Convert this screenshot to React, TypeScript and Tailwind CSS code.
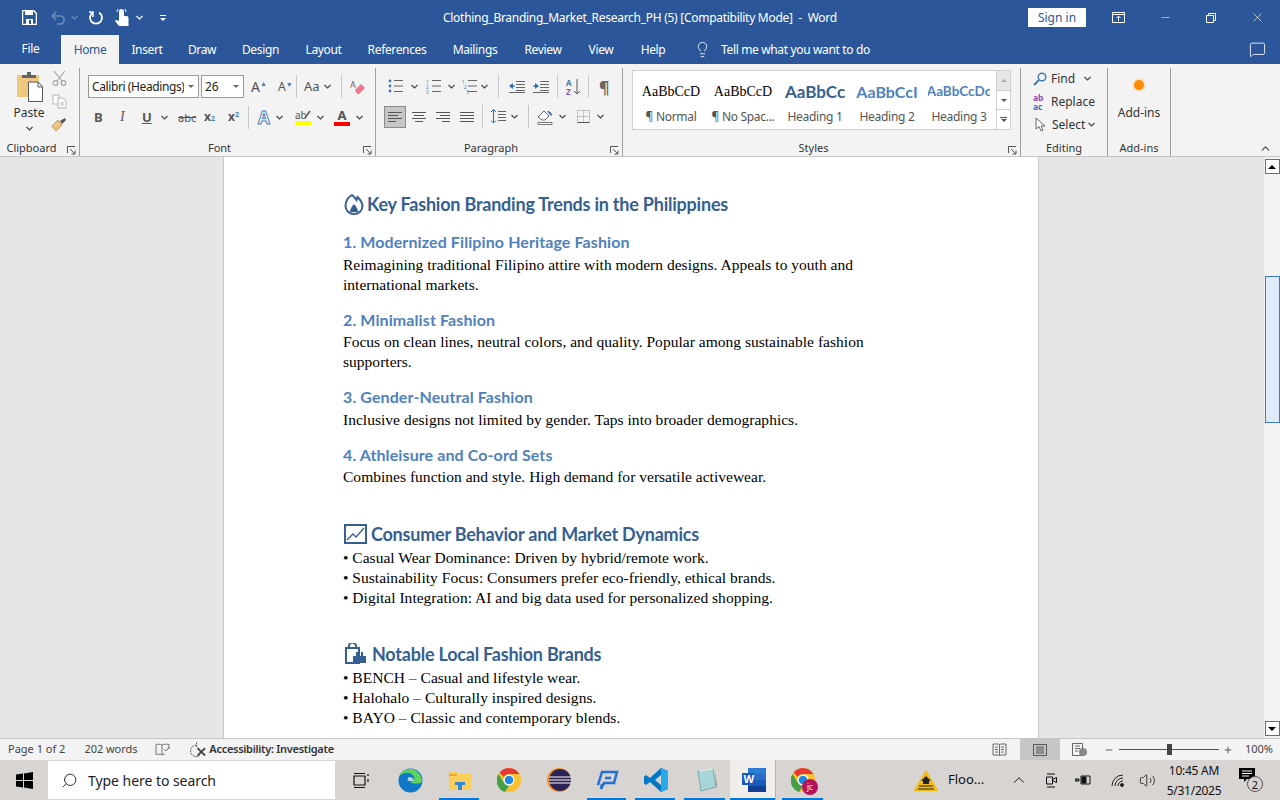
import type { ReactNode } from 'react';
import { ChevronUp, Lightbulb, MessageSquare, Minus, Plus, Search, Volume2, X } from 'lucide-react';

const ui = "font-['Noto_Sans',sans-serif]";

function Chev({ className = 'text-[#444]' }: { className?: string }) {
  return (
    <svg width="7" height="5" viewBox="0 0 7 5" className={`shrink-0 ${className}`}>
      <path d="M.5 1 3.500 4 6.500 1" fill="none" stroke="currentColor" strokeWidth="1.100" />
    </svg>
  );
}

function Launcher() {
  return (
    <svg width="9" height="9" viewBox="0 0 9 9" className="shrink-0 text-[#555]">
      <path d="M.5 7V.5H8M3 3l5 5M8 4.500V8H4.500" fill="none" stroke="currentColor" />
    </svg>
  );
}

function Group({
  label,
  className,
  launcher,
  children,
}: {
  label: string;
  className: string;
  launcher?: boolean;
  children: ReactNode;
}) {
  return (
    <div className={`relative flex h-[88px] shrink-0 flex-col border-r border-[#9f9f9f] ${className}`}>
      <div className="h-[71px]">{children}</div>
      <div className={`flex h-[16px] items-center justify-center text-[11px] leading-none text-[#333] ${launcher ? 'pr-[16px]' : ''}`}>
        {label}
      </div>
      {launcher && (
        <span className="absolute bottom-[1px] right-[3px]">
          <Launcher />
        </span>
      )}
    </div>
  );
}

function Lines({ align = 'left' }: { align?: 'left' | 'center' | 'right' | 'full' }) {
  const rows =
    align === 'left'
      ? ['M0 .5h14', 'M0 3.500h10', 'M0 6.500h14', 'M0 9.500h8']
      : align === 'center'
        ? ['M0 .5h14', 'M2 3.500h10', 'M0 6.500h14', 'M3 9.500h8']
        : align === 'right'
          ? ['M0 .5h14', 'M4 3.500h10', 'M0 6.500h14', 'M6 9.500h8']
          : ['M0 .5h14', 'M0 3.500h14', 'M0 6.500h14', 'M0 9.500h14'];
  return (
    <svg width="14" height="10" viewBox="0 0 14 10">
      <path d={rows.join('')} stroke="#555" fill="none" />
    </svg>
  );
}

function ClipboardGroup() {
  return (
    <div className="flex pl-[12px] pt-[2px]">
      <div className="flex w-[34px] flex-col items-center pt-[2px]">
        <svg width="30" height="30" viewBox="0 0 30 30">
          <path d="M3 3h22v22H3z" fill="#edc87e" />
          <path d="M8 6V3h5V0h4v3h5v3z" fill="#666" />
          <path d="M14.500 10H24l4.500 4.500v15h-14z" fill="#fff" stroke="#555" />
          <path d="M24 10v5h4.500" fill="none" stroke="#555" />
        </svg>
        <span className="mt-[3px] text-[12px] leading-[16px] text-[#333]">Paste</span>
        <span className="mt-[5px]">
          <Chev />
        </span>
      </div>
      <div className="ml-[5px] flex flex-col items-center gap-[8px]">
        <svg width="15" height="16" viewBox="0 0 15 16" fill="none" stroke="#a5a5a5" strokeWidth="1.200">
          <path d="M2 1l8 10M13 1 5 11" />
          <circle cx="3.500" cy="13" r="2.300" />
          <circle cx="11.500" cy="13" r="2.300" />
        </svg>
        <svg width="15" height="15" viewBox="0 0 15 15" fill="#fff" stroke="#b5b5b5">
          <path d="M1 1h6v9H1z" />
          <path d="M6 4h5l3 3v7H6z" />
          <path d="M8 9h4M8 11h4" />
        </svg>
        <svg width="16" height="15" viewBox="0 0 16 15">
          <path d="M1 9 7 3l4 5-6 6z" fill="#edc87e" stroke="#b9975b" />
          <path d="M9 4l5-3 1 2-4 4z" fill="#555" />
        </svg>
      </div>
    </div>
  );
}

function FontGroup() {
  return (
    <div className="flex flex-col pl-[8px] pt-[7px]">
      <div className="flex h-[23px] items-center">
        <div className="flex h-[23px] w-[111px] items-center justify-between border border-[#9a9a9a] bg-white pl-[3px] pr-[4px] text-[12px] text-[#222]">
          <span className="overflow-hidden whitespace-nowrap tracking-[-0.4px]">Calibri (Headings)</span>
          <span className="ml-[3px] h-0 w-0 shrink-0 border-x-[3px] border-t-[3px] border-x-transparent border-t-[#666]" />
        </div>
        <div className="ml-[2px] flex h-[23px] w-[43px] items-center justify-between border border-[#9a9a9a] bg-white pl-[3px] pr-[4px] text-[12px] text-[#222]">
          26
          <span className="h-0 w-0 border-x-[3px] border-t-[3px] border-x-transparent border-t-[#666]" />
        </div>
        <span className="ml-[7px] flex w-[17px] items-start text-[14px] leading-none text-[#555]">
          A<span className="text-[7px] text-[#4a7ebb]">▲</span>
        </span>
        <span className="ml-[10px] flex w-[14px] items-start text-[12px] leading-none text-[#555]">
          A<span className="text-[7px] text-[#4a7ebb]">▼</span>
        </span>
        <span className="mx-[4px] h-[23px] w-px shrink-0 bg-[#c6c6c6]" />
        <span className="ml-[3px] text-[13px] text-[#555]">Aa</span>
        <span className="ml-[4px]">
          <Chev />
        </span>
        <span className="ml-[10px] mr-[8px] h-[23px] w-px bg-[#c6c6c6]" />
        <svg width="16" height="16" viewBox="0 0 16 16">
          <text x="0" y="9" fontSize="9" fill="#666" fontFamily="Noto Sans">A</text>
          <path d="M5 11 11 5l4 4-6 6H7z" fill="#e8788e" />
        </svg>
      </div>
      <div className="mt-[7px] flex h-[24px] items-center text-[#555]">
        <span className="ml-[6px] w-[26px] text-[13px] font-bold leading-none">B</span>
        <span className="w-[22px] font-['Liberation_Serif',serif] text-[14px] italic leading-none">I</span>
        <span className="w-[19px] text-[13px] font-bold leading-none underline">U</span>
        <span className="w-[17px]">
          <Chev />
        </span>
        <span className="w-[26px] text-[11px] leading-none line-through">abc</span>
        <span className="w-[24px] text-[12px] font-bold leading-none">
          x<span className="text-[7px] text-[#4a7ebb]">2</span>
        </span>
        <span className="flex w-[17px] items-start text-[12px] font-bold leading-none">
          x<span className="text-[7px] text-[#4a7ebb]">2</span>
        </span>
        <span className="ml-[3px] h-[23px] w-px bg-[#c6c6c6]" />
        <span className="ml-[9px] w-[18px] text-[17px] font-bold leading-none text-white [-webkit-text-stroke:1px_#4a7ebb]">
          A
        </span>
        <span className="w-[19px]">
          <Chev />
        </span>
        <span className="relative flex w-[16px] flex-col items-start text-[10px] leading-[11px]">
          ab
          <span className="h-[4px] w-[16px] bg-[#ffff00]" />
          <svg width="7" height="9" viewBox="0 0 7 9" className="absolute right-0 top-0">
            <path d="M1 8 6 1" stroke="#555" strokeWidth="1.500" />
          </svg>
        </span>
        <span className="ml-[6px] w-[14px]">
          <Chev />
        </span>
        <span className="ml-[3px] flex w-[16px] flex-col items-center text-[13px] font-bold leading-[13px]">
          A
          <span className="h-[4px] w-[16px] bg-[#ff0000]" />
        </span>
        <span className="ml-[6px]">
          <Chev />
        </span>
      </div>
    </div>
  );
}

function ListGlyph({ numbered, indent }: { numbered?: boolean; indent?: boolean }) {
  return (
    <svg width="15" height="15" viewBox="0 0 15 15">
      {numbered ? (
        <g fill="#3f76b5" fontSize="4.500" fontFamily="Noto Sans">
          <text x="0" y="4.500">1</text>
          <text x={indent ? 2 : 0} y="9.500">2</text>
          <text x={indent ? 4 : 0} y="14.500">3</text>
        </g>
      ) : (
        <g fill="#3f76b5">
          <circle cx="2" cy="2" r="1.400" />
          <circle cx="2" cy="7" r="1.400" />
          <circle cx="2" cy="12" r="1.400" />
        </g>
      )}
      <path d="M6 1.500h9M6 7h9M6 12.500h9" stroke="#666" fill="none" />
    </svg>
  );
}

function ParagraphGroup() {
  return (
    <div className="flex flex-col pl-[8px] pt-[7px]">
      <div className="flex h-[23px] items-center pl-[4px]">
        <ListGlyph />
        <span className="ml-[8px]">
          <Chev />
        </span>
        <span className="ml-[8px]">
          <ListGlyph numbered />
        </span>
        <span className="ml-[7px]">
          <Chev />
        </span>
        <span className="ml-[7px]">
          <ListGlyph numbered indent />
        </span>
        <span className="ml-[4px]">
          <Chev />
        </span>
        <span className="mx-[10px] h-[23px] w-px bg-[#c6c6c6]" />
        <svg width="16" height="12" viewBox="0 0 16 12">
          <path d="M7 .5h9M7 3.500h9M7 6.500h9M7 9.500h9M0 11.500h16" stroke="#666" fill="none" />
          <path d="M0 5 4 2v6z" fill="#2f6eb5" />
          <path d="M3 4.500h3v1.200H3z" fill="#2f6eb5" />
        </svg>
        <svg width="16" height="12" viewBox="0 0 16 12" className="ml-[8px]">
          <path d="M7 .5h9M7 3.500h9M7 6.500h9M7 9.500h9M0 11.500h16" stroke="#666" fill="none" />
          <path d="M6 5 2 2v6z" fill="#2f6eb5" />
          <path d="M0 4.500h3v1.200H0z" fill="#2f6eb5" />
        </svg>
        <span className="mx-[8px] h-[23px] w-px bg-[#c6c6c6]" />
        <svg width="15" height="20" viewBox="0 0 15 20">
          <text x="0" y="9" fontSize="8" fontWeight="700" fill="#3f76b5" fontFamily="Noto Sans">A</text>
          <text x="0" y="18" fontSize="8" fontWeight="700" fill="#8a4fb0" fontFamily="Noto Sans">Z</text>
          <path d="M11 2v15M8 14l3 3 3-3" stroke="#555" fill="none" />
        </svg>
        <span className="mx-[7px] h-[23px] w-px bg-[#c6c6c6]" />
        <span className="ml-[3px] text-[16px] font-bold leading-none text-[#666]">¶</span>
      </div>
      <div className="mt-[7px] flex h-[23px] items-center">
        <span className="flex h-[22px] w-[22px] items-center justify-center border border-[#8a8a8a] bg-[#c6c6c6]">
          <Lines />
        </span>
        <span className="ml-[6px]">
          <Lines align="center" />
        </span>
        <span className="ml-[10px]">
          <Lines align="right" />
        </span>
        <span className="ml-[10px]">
          <Lines align="full" />
        </span>
        <span className="mx-[8px] h-[23px] w-px bg-[#c6c6c6]" />
        <svg width="15" height="15" viewBox="0 0 15 15">
          <path d="M2.500 1v13M0 3l2.500-2.500L5 3M0 11.500 2.500 14 5 11.500" stroke="#2f6eb5" fill="none" />
          <path d="M7 2.500h8M7 5.500h8M7 8.500h8M7 11.500h8" stroke="#666" fill="none" />
        </svg>
        <span className="ml-[5px]">
          <Chev />
        </span>
        <span className="ml-[10px] mr-[8px] h-[23px] w-px bg-[#c6c6c6]" />
        <svg width="17" height="16" viewBox="0 0 17 16">
          <path d="M1 8 7 2l5 5-4 4H5z" fill="#fff" stroke="#666" />
          <path d="M10 2c3 0 5 2 5 5l-2-1z" fill="#3f76b5" />
          <path d="M1 13.500h14v2H1z" fill="#fff" stroke="#777" />
        </svg>
        <span className="ml-[5px]">
          <Chev />
        </span>
        <svg width="13" height="13" viewBox="0 0 13 13" className="ml-[11px]">
          <path d="M.5.5h12v12H.5zM6.500.5v12M.5 6.500h12" stroke="#999" strokeDasharray="1 1" fill="none" />
          <path d="M.5 12.500h12" stroke="#555" />
        </svg>
        <span className="ml-[7px]">
          <Chev />
        </span>
      </div>
    </div>
  );
}

const styleItems = [
  { preview: 'AaBbCcD', label: '¶ Normal', cls: "font-['Liberation_Serif',serif] text-[14px] text-black" },
  { preview: 'AaBbCcD', label: '¶ No Spac...', cls: "font-['Liberation_Serif',serif] text-[14px] text-black" },
  { preview: 'AaBbCc', label: 'Heading 1', cls: "font-['Lato',sans-serif] text-[17px] font-bold text-[#365f91]" },
  { preview: 'AaBbCcI', label: 'Heading 2', cls: "font-['Lato',sans-serif] text-[16px] font-bold text-[#4f81bd]" },
  { preview: 'AaBbCcDc', label: 'Heading 3', cls: "font-['Lato',sans-serif] text-[13.500px] font-bold text-[#4f81bd]" },
];

function StylesGroup() {
  return (
    <div className="flex pl-[9px] pt-[2px]">
      <div className="flex h-[60px] w-[379px] border border-[#d0d0d0] bg-white">
        <div className="flex flex-1 pl-[2px]">
          {styleItems.map((s) => (
            <div key={s.label} className="flex w-[72px] flex-col items-center">
              <div className={`flex h-[38px] w-[62px] items-center justify-center overflow-hidden whitespace-nowrap pt-[3px] ${s.cls}`}>
                {s.preview}
              </div>
              <div className="text-[12px] leading-[16px] tracking-[-0.3px] text-[#555]">{s.label}</div>
            </div>
          ))}
        </div>
        <div className="flex w-[14px] flex-col border-l border-[#d0d0d0] text-[#666]">
          <span className="flex h-[20px] items-center justify-center border-b border-[#d0d0d0] bg-[#e6e6e6]">
            <span className="h-0 w-0 border-x-[3px] border-b-[3px] border-x-transparent border-b-[#aaa]" />
          </span>
          <span className="flex h-[19px] items-center justify-center border-b border-[#d0d0d0]">
            <span className="h-0 w-0 border-x-[3px] border-t-[3px] border-x-transparent border-t-[#555]" />
          </span>
          <span className="flex flex-1 flex-col items-center justify-center gap-[1px]">
            <span className="h-px w-[7px] bg-[#555]" />
            <span className="h-0 w-0 border-x-[3px] border-t-[3px] border-x-transparent border-t-[#555]" />
          </span>
        </div>
      </div>
    </div>
  );
}

function EditingGroup() {
  return (
    <div className="-mt-px flex flex-col pl-[12px] text-[12px] text-[#333]">
      <div className="flex h-[23px] items-center">
        <svg width="14" height="14" viewBox="0 0 14 14" fill="none" stroke="#3f76b5" strokeWidth="1.400">
          <circle cx="9" cy="5" r="3.800" />
          <path d="M6 8 1 13" strokeWidth="2" />
        </svg>
        <span className="ml-[4px]">Find</span>
        <span className="ml-[9px]">
          <Chev />
        </span>
      </div>
      <div className="flex h-[23px] items-center">
        <span className="w-[16px] text-[8.500px] font-bold leading-[9px] text-[#8a4fb0]">
          ab
          <br />
          <span className="text-[#3f76b5]">ac</span>
        </span>
        <span className="ml-[2px]">Replace</span>
      </div>
      <div className="flex h-[23px] items-center">
        <svg width="12" height="15" viewBox="0 0 12 15" className="ml-[2px]">
          <path d="M1 1v11l3-2.500 2 4.500 2-1-2-4h4z" fill="#fff" stroke="#666" />
        </svg>
        <span className="ml-[5px]">Select</span>
        <span className="ml-[3px]">
          <Chev />
        </span>
      </div>
    </div>
  );
}

function Ribbon() {
  return (
    <div className={`flex h-[93px] shrink-0 border-b border-[#c6c6c6] bg-[#f3f3f3] pt-[4px] ${ui}`}>
      <Group label="Clipboard" className="w-[80px]" launcher>
        <ClipboardGroup />
      </Group>
      <Group label="Font" className="w-[296px]" launcher>
        <FontGroup />
      </Group>
      <Group label="Paragraph" className="w-[247px]" launcher>
        <ParagraphGroup />
      </Group>
      <Group label="Styles" className="w-[398px]" launcher>
        <StylesGroup />
      </Group>
      <Group label="Editing" className="w-[87px]">
        <EditingGroup />
      </Group>
      <Group label="Add-ins" className="w-[63px]">
        <div className="flex flex-col items-center pt-[12px]">
          <span className="h-[10px] w-[10px] rounded-full bg-[#ff8c00] shadow-[0_0_3px_#ffb347]" />
          <span className="mt-[15px] text-[12px] leading-[16px] text-[#333]">Add-ins</span>
        </div>
      </Group>
      <div className="flex flex-1 items-end justify-end pb-[1px] pr-[8px]">
        <ChevronUp size={13} className="text-[#444]" />
      </div>
    </div>
  );
}

const tabs = [
  { name: 'Insert', w: 56 },
  { name: 'Draw', w: 54 },
  { name: 'Design', w: 63 },
  { name: 'Layout', w: 63 },
  { name: 'References', w: 84 },
  { name: 'Mailings', w: 72 },
  { name: 'Review', w: 64 },
  { name: 'View', w: 52 },
  { name: 'Help', w: 52 },
];

function TitleBar() {
  return (
    <div className={`flex h-[64px] shrink-0 flex-col bg-[#2b579a] text-white ${ui}`}>
      <div className="flex h-[35px] items-center">
        <div className="flex w-[180px] items-center pl-[22px]">
          <svg width="15" height="15" viewBox="0 0 15 15">
            <path d="M.5.5h11l3 3v11H.5z" fill="none" stroke="#fff" strokeWidth="1.500" />
            <path d="M3 1h8v4H3zM4 9h7v5H4z" fill="#fff" />
            <path d="M7 10h2v4H7z" fill="#2b579a" />
          </svg>
          <svg width="16" height="14" viewBox="0 0 16 14" fill="none" stroke="#6d8dbd" strokeWidth="1.600" className="ml-[14px]">
            <path d="M5 1 1.500 5 5 9M2 5h7a4 4 0 0 1 0 8H6" />
          </svg>
          <span className="ml-[4px]">
            <Chev className="text-[#6d8dbd]" />
          </span>
          <svg width="16" height="16" viewBox="0 0 16 16" fill="none" stroke="#fff" strokeWidth="1.800" className="ml-[10px]">
            <path d="M5 2.500A6 6 0 1 0 11 2.500" />
            <path d="M5 7V2H1" strokeWidth="1.500" />
          </svg>
          <svg width="15" height="17" viewBox="0 0 15 17" fill="#fff" className="ml-[10px]">
            <path d="M5 2.500a2.500 2.500 0 0 1 5 0V7h2.500c1.500 0 2 1 2 2.500V17H5L1 12l1-1 3 1z" />
            <path d="M3 3a4.500 4.500 0 0 1 9 0" fill="none" stroke="#fff" />
          </svg>
          <span className="ml-[7px]">
            <Chev className="text-white" />
          </span>
          <span className="ml-[17px] flex flex-col items-center gap-[2px]">
            <span className="h-px w-[6px] bg-white" />
            <span className="h-0 w-0 border-x-[3px] border-t-[3px] border-x-transparent border-t-white" />
          </span>
        </div>
        <div className="ml-[263px] w-[395px] whitespace-pre text-[12px] tracking-[-0.28px]">
          Clothing_Branding_Market_Research_PH (5) [Compatibility Mode]  -  Word
        </div>
        <div className="ml-[190px] flex h-[19px] w-[58px] items-center justify-center bg-white text-[12px] text-[#2b579a]">
          Sign in
        </div>
        <svg width="13" height="11" viewBox="0 0 13 11" fill="none" stroke="#fff" className="ml-[26px]">
          <path d="M.5.5h12v10H.5zM.5 2.500h12M6.500 9V4.500M4.500 6l2-2 2 2" />
        </svg>
        <Minus size={13} strokeWidth={1} className="ml-[34px]" />
        <svg width="10" height="10" viewBox="0 0 10 10" fill="none" stroke="#fff" className="ml-[34px]">
          <path d="M.5 2.500h7v7h-7zM2.500 2.500v-2h7v7h-2" />
        </svg>
        <X size={15} strokeWidth={1} className="ml-[34px]" />
      </div>
      <div className="flex h-[29px] items-stretch text-[12px] tracking-[-0.35px]">
        <span className="flex w-[61px] items-center justify-center pb-[1px]">File</span>
        <span className="flex w-[58px] items-center justify-center bg-[#f3f3f3] text-[#2b579a]">Home</span>
        {tabs.map((t) => (
          <span key={t.name} className="flex items-center justify-center" style={{ width: t.w }}>
            {t.name}
          </span>
        ))}
        <Lightbulb size={17} strokeWidth={1.200} className="ml-[15px] self-center" />
        <span className="ml-[10px] flex items-center">Tell me what you want to do</span>
        <MessageSquare size={17} strokeWidth={1.200} className="ml-auto mr-[14px] self-center" />
      </div>
    </div>
  );
}

function H1({ icon, children, className = '' }: { icon: ReactNode; children: ReactNode; className?: string }) {
  return (
    <div className={`flex h-[26px] items-center font-['Lato',sans-serif] text-[18px] font-bold leading-[26px] tracking-[-0.22px] text-[#365f91] ${className}`}>
      {icon}
      {children}
    </div>
  );
}

function H2({ children, className }: { children: ReactNode; className: string }) {
  return (
    <div className={`h-[24px] font-['Lato',sans-serif] text-[16px] font-bold leading-[24px] tracking-[0.1px] text-[#4f81bd] ${className}`}>
      {children}
    </div>
  );
}

function Body({ children, className = '' }: { children: ReactNode; className?: string }) {
  return <div className={`h-[20px] whitespace-nowrap leading-[20px] ${className}`}>{children}</div>;
}

function Document() {
  return (
    <div className="flex min-h-0 flex-1 bg-[#e6e6e6]">
      <div className="flex-1">
        <div className="ml-[223px] h-full w-[816px] overflow-hidden border-x border-[#c6c6c6] bg-white pl-[119px] pt-[34px] font-['Liberation_Serif',serif] text-[15.500px] tracking-[0.02px] text-black">
          <H1
            icon={
              <svg width="20" height="22" viewBox="0 0 20 22" className="ml-px mr-[3px]" fill="none" stroke="#365f91" strokeWidth="2">
                <path d="M8 2C3 5 1.500 9 1.500 13a8.500 8 0 0 0 17 0c0-4-3-7-5-9l-1 3C11 5 9.500 3 8 2z" />
                <path d="M6 19c0-3 2-6 4-8 2 2 4 5 4 8z" fill="#365f91" stroke="none" />
              </svg>
            }
          >
            Key Fashion Branding Trends in the Philippines
          </H1>
          <H2 className="mt-[13px]">1. Modernized Filipino Heritage Fashion</H2>
          <Body className="mt-px">Reimagining traditional Filipino attire with modern designs. Appeals to youth and</Body>
          <Body>international markets.</Body>
          <H2 className="mt-[13px]">2. Minimalist Fashion</H2>
          <Body>Focus on clean lines, neutral colors, and quality. Popular among sustainable fashion</Body>
          <Body>supporters.</Body>
          <H2 className="mt-[13px]">3. Gender-Neutral Fashion</H2>
          <Body className="mt-px">Inclusive designs not limited by gender. Taps into broader demographics.</Body>
          <H2 className="mt-[13px]">4. Athleisure and Co-ord Sets</H2>
          <Body>Combines function and style. High demand for versatile activewear.</Body>
          <H1
            className="mt-[34px]"
            icon={
              <svg width="23" height="20" viewBox="0 0 23 20" className="ml-px mr-[4px]" fill="none" stroke="#365f91">
                <path d="M1 1h21v18H1z" strokeWidth="2" />
                <path d="M3 16 9 10l3 3 8-9" strokeWidth="1.300" />
              </svg>
            }
          >
            Consumer Behavior and Market Dynamics
          </H1>
          <Body className="mt-px">• Casual Wear Dominance: Driven by hybrid/remote work.</Body>
          <Body>• Sustainability Focus: Consumers prefer eco-friendly, ethical brands.</Body>
          <Body>• Digital Integration: AI and big data used for personalized shopping.</Body>
          <H1
            className="mt-[33px]"
            icon={
              <svg width="23" height="22" viewBox="0 0 23 22" className="ml-px mr-[5px]" fill="none" stroke="#365f91" strokeWidth="2">
                <path d="M2 5h13v15H2z" />
                <path d="M5 5V3a3 3 0 0 1 7 0v2" />
                <path d="M9 13h13v7H9z" fill="#365f91" stroke="none" />
                <path d="M12 9h2v4h-2zM17 9h2v4h-2z" fill="#365f91" stroke="none" />
              </svg>
            }
          >
            Notable Local Fashion Brands
          </H1>
          <Body className="mt-px">• BENCH – Casual and lifestyle wear.</Body>
          <Body>• Halohalo – Culturally inspired designs.</Body>
          <Body>• BAYO – Classic and contemporary blends.</Body>
        </div>
      </div>
      <div className="flex w-[16px] shrink-0 flex-col items-center bg-[#f3f3f3] pt-[2px]">
        <span className="flex h-[15px] w-[15px] items-center justify-center border border-[#6d6d6d] bg-white">
          <span className="h-0 w-0 border-x-[4px] border-b-[4px] border-x-transparent border-b-black" />
        </span>
        <span className="mt-[102px] h-[147px] w-[15px] border border-[#3f78c4] bg-[#e0ebfb]" />
        <span className="mt-auto mb-[2px] flex h-[15px] w-[15px] items-center justify-center border border-[#6d6d6d] bg-white">
          <span className="h-0 w-0 border-x-[4px] border-t-[4px] border-x-transparent border-t-black" />
        </span>
      </div>
    </div>
  );
}

function StatusBar() {
  return (
    <div className={`flex h-[22px] shrink-0 items-center border-t border-[#c6c6c6] bg-[#f3f3f3] text-[11px] text-[#444] ${ui}`}>
      <span className="ml-[8px]">Page 1 of 2</span>
      <span className="ml-[19px] tracking-[-0.05px]">202 words</span>
      <svg width="15" height="14" viewBox="0 0 15 14" fill="none" stroke="#777" className="ml-[18px]">
        <path d="M7 2C5 1 3 1 1 1.500v10c2-.5 4-.5 6 .5 1.500-1 3-1 3-1M7 2v10M7 2c1.500-1 4-1 7-.5V6M9 6l2 2 3-4" />
      </svg>
      <svg width="18" height="16" viewBox="0 0 19 16" fill="none" stroke="#444" className="ml-[19px]">
        <path d="M8 3a6 6 0 1 0 3 11M8 0v6" strokeDasharray="2 1" />
        <path d="M9 6l8 8M17 6l-8 8" strokeWidth="2" />
      </svg>
      <span className="ml-[2px] font-semibold tracking-[-0.3px] text-[#333]">Accessibility: Investigate</span>
      <svg width="15" height="13" viewBox="0 0 15 13" fill="none" stroke="#666" className="ml-auto">
        <path d="M1 1h5.500l1 1 1-1H14v11H8.500l-1 1-1-1H1zM7.500 2v10M3 4h3M3 6.500h3M3 9h3M9 4h3M9 6.500h3M9 9h3" />
      </svg>
      <span className="ml-[13px] flex h-[21px] w-[40px] items-center justify-center bg-[#c6c6c6]">
        <svg width="14" height="12" viewBox="0 0 14 12" fill="none" stroke="#555">
          <path d="M.5.5h13v11H.5zM3 3h8M3 5h8M3 7h8M3 9h8" />
        </svg>
      </span>
      <svg width="15" height="13" viewBox="0 0 15 13" className="ml-[12px]">
        <path d="M.5.5h10v12H.5zM3 3h5M3 5.500h5M3 8h3" fill="none" stroke="#666" />
        <circle cx="11" cy="9" r="4" fill="#888" />
      </svg>
      <Minus size={10} className="ml-[17px] text-[#444]" />
      <div className="ml-[5px] flex h-[13px] w-[100px] items-center justify-start">
        <div className="h-px w-[48px] bg-[#555]" />
        <div className="h-[11px] w-[5px] bg-[#444]" />
        <div className="h-px w-[47px] bg-[#555]" />
      </div>
      <Plus size={10} className="ml-[4px] text-[#444]" />
      <span className="ml-[12px] mr-[7px]">100%</span>
    </div>
  );
}

function AppSlot({
  active,
  current,
  className = 'w-[49px]',
  children,
}: {
  active?: boolean;
  current?: boolean;
  className?: string;
  children: ReactNode;
}) {
  return (
    <div className={`relative flex h-[40px] items-center justify-center ${current ? 'bg-[#f1eeec] pl-[3px]' : ''} ${className}`}>
      {children}
      {active && (
        <span className={`absolute bottom-0 h-[2px] bg-[#0078d7] ${current ? 'left-0 right-0' : 'left-[4px] right-[5px]'}`} />
      )}
    </div>
  );
}

function Chrome() {
  return (
    <svg width="24" height="24" viewBox="0 0 24 24">
      <circle cx="12" cy="12" r="12" fill="#fbc02d" />
      <path d="M12 0a12 12 0 0 1 10.400 6H12a6 6 0 0 0-5.200 3L2.600 4.500A12 12 0 0 1 12 0z" fill="#e53935" />
      <path d="M1.600 6 7 15a6 6 0 0 0 5 3l-4 6A12 12 0 0 1 1.600 6z" fill="#43a047" />
      <circle cx="12" cy="12" r="5.500" fill="#fff" />
      <circle cx="12" cy="12" r="4.300" fill="#1e88e5" />
    </svg>
  );
}

function Taskbar() {
  return (
    <div className={`flex h-[40px] shrink-0 items-center bg-[#d8d4d2] ${ui}`}>
      <div className="flex w-[48px] justify-center">
        <svg width="17" height="17" viewBox="0 0 17 17" fill="#000">
          <path d="M0 2.500 7 1.500v6.500H0zM8 1.400 17 0v8H8zM0 9h7v6.500l-7-1zM8 9h9v8l-9-1.400z" />
        </svg>
      </div>
      <div className="flex h-[38px] w-[287px] items-center bg-white">
        <Search size={17} strokeWidth={1.300} className="ml-[13px] -scale-x-100 text-[#222]" />
        <span className="ml-[10px] text-[14px] tracking-[-0.05px] text-[#222]">Type here to search</span>
      </div>
      <div className="ml-px flex items-center">
        <AppSlot className="w-[50px]">
          <svg width="16" height="15" viewBox="0 0 16 15" fill="none" stroke="#111" strokeWidth="1.200">
            <path d="M1 3h11v9H1zM1 .5h11M1 14.500h11M15 1v2M15 6v3" />
          </svg>
        </AppSlot>
        <AppSlot>
          <svg width="25" height="25" viewBox="0 0 25 25">
            <circle cx="12.500" cy="12.500" r="12" fill="#0f78c8" />
            <path d="M24 14C24 7 19 1 12 1 7 1 3 4 1.500 8 4 5 8 4 11 5c4 1 6 4 5 8l-4 1c3 2 9 2 12 0z" fill="#5fd35f" />
            <path d="M11 9c3 0 5 2 5 4h-6c-1-1 0-4 1-4z" fill="#fff" opacity=".7" />
          </svg>
        </AppSlot>
        <AppSlot active>
          <svg width="22" height="19" viewBox="0 0 22 19">
            <path d="M0 1h8l2 2h12v16H0z" fill="#fbcf5c" />
            <path d="M0 3h8v2H0z" fill="#e3a92f" />
            <path d="M6 14V11h10v3h-3v5H9v-5z" fill="#2f88d8" />
          </svg>
        </AppSlot>
        <AppSlot className="w-[50px]">
          <Chrome />
        </AppSlot>
        <AppSlot>
          <svg width="24" height="24" viewBox="0 0 24 24">
            <circle cx="12" cy="12" r="12" fill="#f7941e" />
            <circle cx="13" cy="12" r="11" fill="#2c2255" />
            <path d="M2 9h22M2 12h22M2 15h22" stroke="#fff" />
          </svg>
        </AppSlot>
        <AppSlot active className="w-[48px]">
          <svg width="24" height="21" viewBox="0 0 24 21" fill="none" stroke="#1f6fd6" strokeWidth="2.500">
            <path d="M3 15 7 2h15l-3 11H9l-3 6 1-5" />
            <path d="M10 8h6" />
          </svg>
        </AppSlot>
        <AppSlot active>
          <svg width="24" height="24" viewBox="0 0 24 24">
            <path d="M17 0 24 3v18l-7 3L6 14l-4 3-2-1.500V8.500L2 7l4 3z" fill="#0078c8" />
            <path d="M17 0 24 3v18l-7 3z" fill="#29a8ea" />
            <path d="M17 7v10l-6-5z" fill="#d8d4d2" />
          </svg>
        </AppSlot>
        <AppSlot active className="w-[50px]">
          <svg width="24" height="24" viewBox="0 0 24 24">
            <path d="M5 3 20 1l3 18-15 4z" fill="#a8d6d8" stroke="#7aa" />
            <path d="M6 3 19 1M7 3l13-2" stroke="#eee" />
            <path d="M22 2l2 15-1 3z" fill="#999" />
          </svg>
        </AppSlot>
        <AppSlot active current className="w-[45px]">
          <svg width="24" height="24" viewBox="0 0 24 24">
            <path d="M6 0h18v24H6z" fill="#2b7cd3" />
            <path d="M6 6h18v6H6z" fill="#2b6cc4" />
            <path d="M6 12h18v6H6z" fill="#185abd" />
            <path d="M6 18h18v6H6z" fill="#103f91" />
            <path d="M0 5h12v12H0z" fill="#185abd" />
            <text x="1.500" y="15" fontSize="11" fontWeight="700" fill="#fff" fontFamily="Noto Sans">W</text>
          </svg>
        </AppSlot>
        <span className="h-[40px] w-[3px] border-l border-[#b5b2b0]" />
        <AppSlot active className="w-[50px]">
          <div className="relative">
            <Chrome />
            <span className="absolute -bottom-[3px] -right-[3px] flex h-[16px] w-[16px] items-center justify-center rounded-full bg-[#b5135b] text-[8px] text-white">
              jc
            </span>
          </div>
        </AppSlot>
      </div>
      <div className="ml-auto flex items-center text-[#111]">
        <svg width="24" height="22" viewBox="0 0 24 22">
          <path d="M12 1 23.500 20a1 1 0 0 1-1 2h-21a1 1 0 0 1-1-2z" fill="#f2bb13" />
          <path d="M7 12l5-5 5 5h-2v3H9v-3z" fill="#222" />
          <path d="M5 17h14M4 20h16" stroke="#222" />
        </svg>
        <span className="ml-[10px] w-[48px] text-[13px]">Floo...</span>
        <ChevronUp size={18} strokeWidth={1.300} className="ml-[14px]" />
        <svg width="11" height="17" viewBox="0 0 11 17" fill="none" stroke="#111" className="ml-[18px]">
          <path d="M1 2h8M1 15h8M.5 5h6v7h-6zM6.500 7.500l4-2v5l-4-2" />
        </svg>
        <svg width="16" height="12" viewBox="0 0 16 12" fill="none" stroke="#111" className="ml-[18px]">
          <path d="M6 2h9v8H6zM1 4v4M3 4v4M0 6h5" />
          <path d="M7 3h4v6H7z" fill="#111" />
        </svg>
        <svg width="14" height="13" viewBox="0 0 14 13" fill="none" stroke="#222" className="ml-[20px]">
          <path d="M1 12A11 11 0 0 1 12 1M4 12a8 8 0 0 1 8-8M7 12a5 5 0 0 1 5-5" />
          <circle cx="11" cy="11" r="1.500" fill="#222" />
        </svg>
        <Volume2 size={17} strokeWidth={1.100} className="ml-[14px]" />
        <div className="ml-[2px] flex w-[72px] flex-col items-center pt-px text-[12px] leading-[20px] tracking-[-0.25px]">
          <span>10:45 AM</span>
          <span>5/31/2025</span>
        </div>
        <div className="relative ml-[9px] mr-[17px] h-[24px] w-[24px]">
          <svg width="16" height="15" viewBox="0 0 16 15" className="absolute left-0 top-0">
            <path d="M0 0h16v11H8l-3 3v-3H0z" fill="#000" />
            <path d="M3 3h10M3 5.500h10M3 8h7" stroke="#fff" />
          </svg>
          <span className="absolute left-[8px] top-[8px] flex h-[16px] w-[16px] items-center justify-center rounded-full border border-[#555] bg-[#d8d4d2] text-[11px] leading-none">
            2
          </span>
        </div>
      </div>
    </div>
  );
}

export default function App() {
  return (
    <div className="flex h-[800px] w-[1280px] flex-col overflow-hidden">
      <TitleBar />
      <Ribbon />
      <Document />
      <StatusBar />
      <Taskbar />
    </div>
  );
}
